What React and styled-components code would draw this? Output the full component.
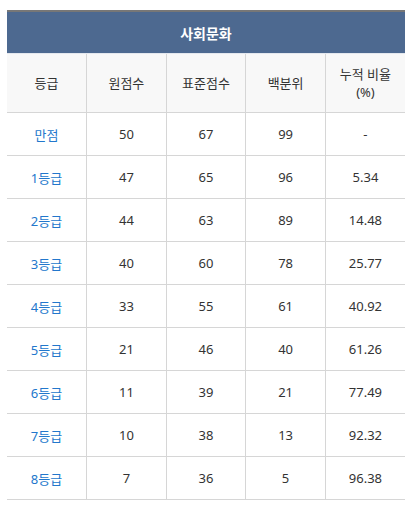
import styled, { createGlobalStyle } from "styled-components";

const GlobalStyle = createGlobalStyle`
  body {
    margin: 0;
    background: #ffffff;
    font-family: "Noto Sans", "Noto Sans CJK KR", sans-serif;
  }
`;

const rows = [
  { grade: "만점", raw: "50", std: "67", pct: "99", cum: "-" },
  { grade: "1등급", raw: "47", std: "65", pct: "96", cum: "5.34" },
  { grade: "2등급", raw: "44", std: "63", pct: "89", cum: "14.48" },
  { grade: "3등급", raw: "40", std: "60", pct: "78", cum: "25.77" },
  { grade: "4등급", raw: "33", std: "55", pct: "61", cum: "40.92" },
  { grade: "5등급", raw: "21", std: "46", pct: "40", cum: "61.26" },
  { grade: "6등급", raw: "11", std: "39", pct: "21", cum: "77.49" },
  { grade: "7등급", raw: "10", std: "38", pct: "13", cum: "92.32" },
  { grade: "8등급", raw: "7", std: "36", pct: "5", cum: "96.38" },
];

const Wrapper = styled.div`
  padding: 10px 6px 0 7px;
`;

const Table = styled.table`
  width: 398px;
  border-collapse: collapse;
  table-layout: fixed;
  border-top: 2px solid #777777;
  font-size: 13px;
  color: #333333;
`;

const Title = styled.th`
  background: #4d6990;
  color: #ffffff;
  font-size: 14px;
  font-weight: 700;
  height: 41px;
  padding: 0;
  border-bottom: 1px solid #e4e8ee;
`;

const HeadCell = styled.th`
  background: #f8f8f8;
  font-weight: 400;
  height: 58px;
  padding: 0 6px;
  line-height: 18px;
  border-bottom: 1px solid #d6d6d6;
  border-left: ${(p) => (p.$first ? "none" : "1px solid #d6d6d6")};
`;

const Cell = styled.td`
  text-align: center;
  height: 42px;
  padding: 0;
  border-bottom: 1px solid #d6d6d6;
  border-left: ${(p) => (p.$first ? "none" : "1px solid #d6d6d6")};
  color: ${(p) => (p.$link ? "#2277cc" : "#333333")};
`;

export default function App() {
  return (
    <Wrapper>
      <GlobalStyle />
      <Table>
        <thead>
          <tr>
            <Title colSpan={5}>사회문화</Title>
          </tr>
          <tr>
            <HeadCell $first>등급</HeadCell>
            <HeadCell>원점수</HeadCell>
            <HeadCell>표준점수</HeadCell>
            <HeadCell>백분위</HeadCell>
            <HeadCell>
              누적 비율
              <br />
              (%)
            </HeadCell>
          </tr>
        </thead>
        <tbody>
          {rows.map((row) => (
            <tr key={row.grade}>
              <Cell $first $link>
                {row.grade}
              </Cell>
              <Cell>{row.raw}</Cell>
              <Cell>{row.std}</Cell>
              <Cell>{row.pct}</Cell>
              <Cell>{row.cum}</Cell>
            </tr>
          ))}
        </tbody>
      </Table>
    </Wrapper>
  );
}
